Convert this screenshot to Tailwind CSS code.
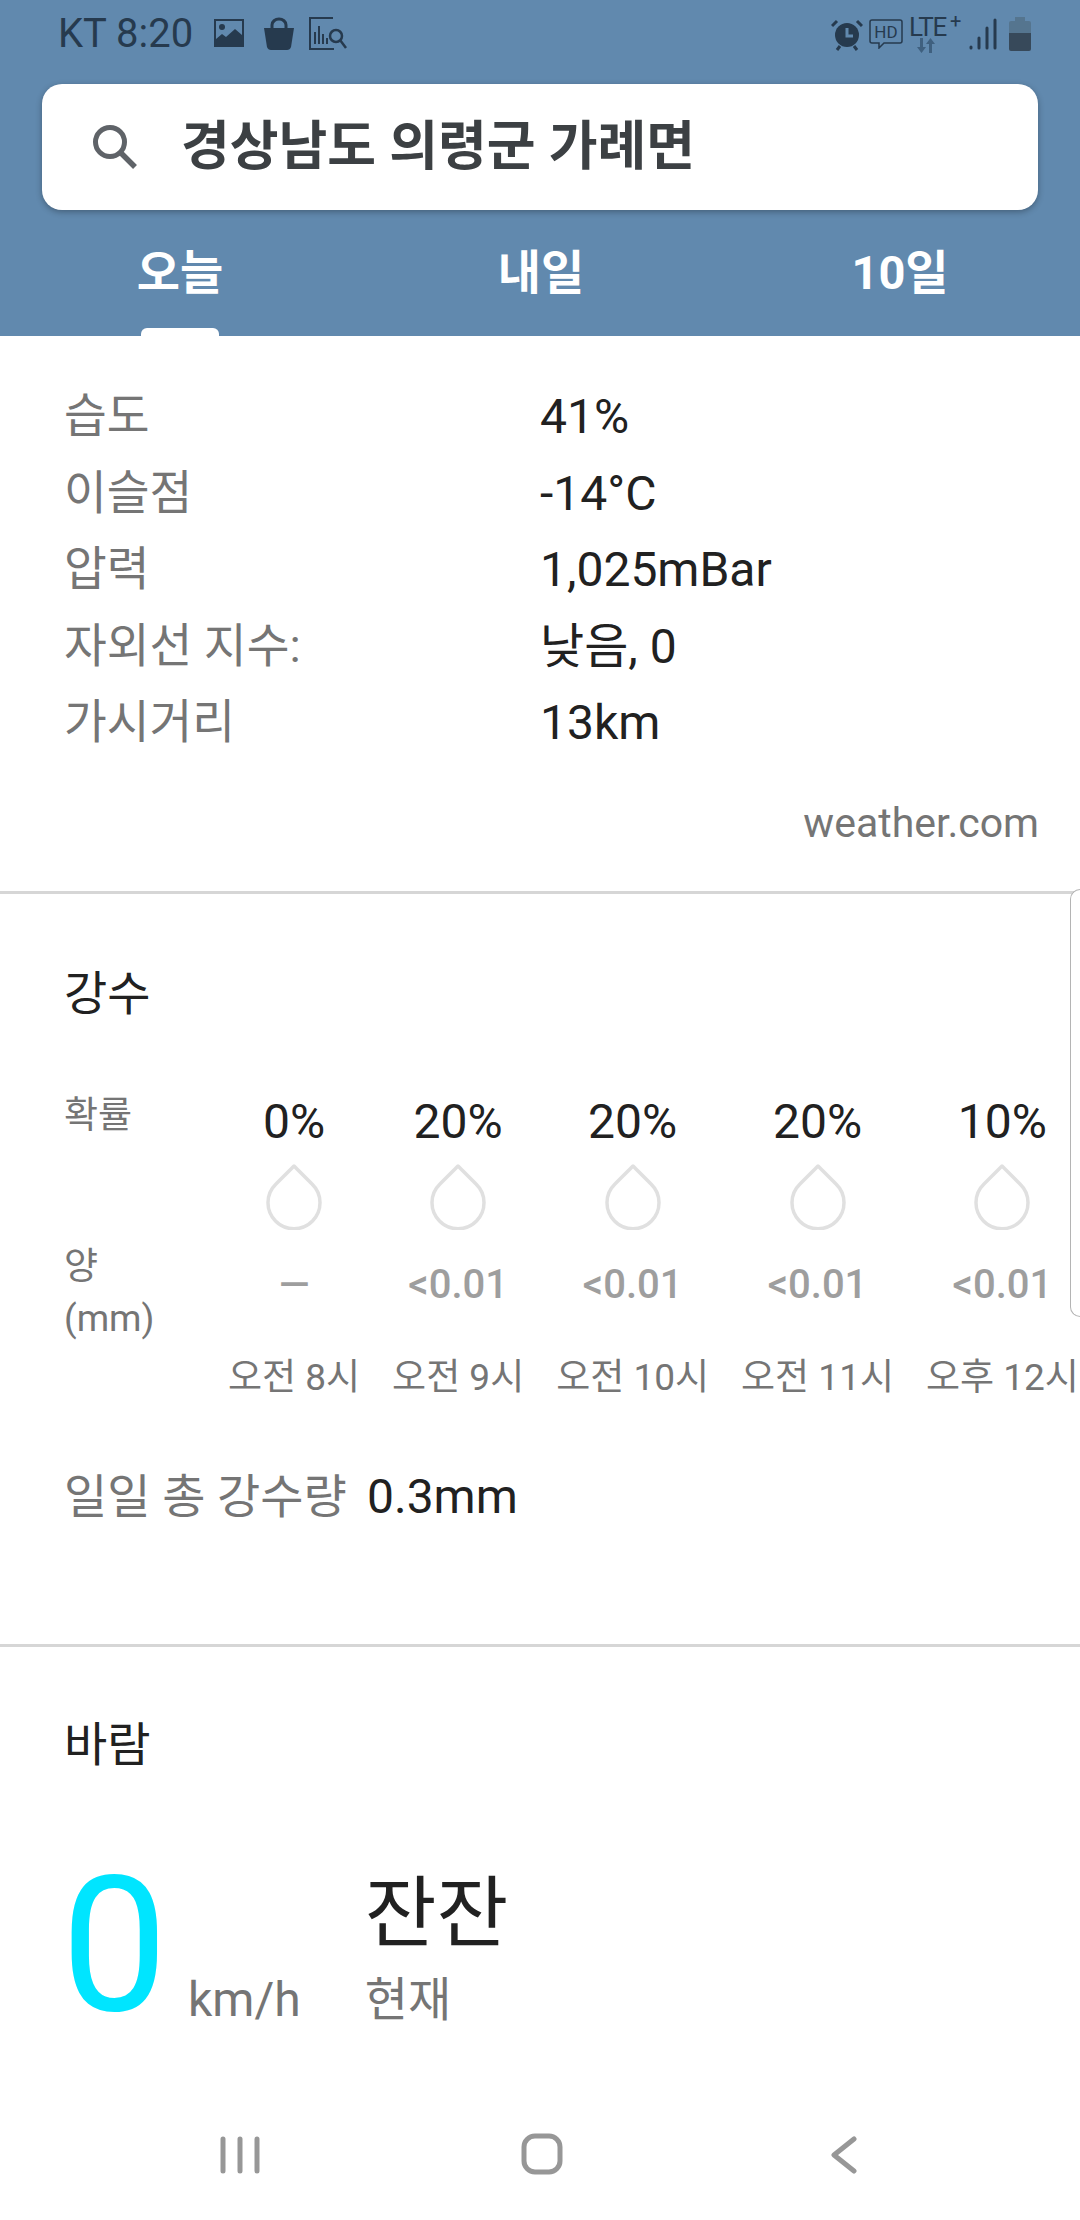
<!DOCTYPE html>
<html lang="ko">

<head>
  <meta charset="UTF-8" />
  <meta name="viewport" content="width=device-width, initial-scale=1.0" />
  <title>날씨</title>
  <script src="https://cdn.jsdelivr.net/npm/@tailwindcss/browser@4"></script>
</head>

<body class="bg-white">
  <div class="relative w-[1080px] h-[2220px] overflow-hidden bg-white font-['Roboto','Noto_Sans_CJK_KR',sans-serif]">

    <!-- header -->
    <header class="h-[336px] bg-[#6189ae] flex flex-col">
      <div class="h-[84px] pl-[58px] pr-[49px] flex items-start justify-between text-[#263a4e]">
        <div class="flex items-center h-[66px] pt-[2px]">
          <span class="text-[40px] leading-none">KT 8:20</span>
          <svg class="ml-[20px]" width="32" height="32" viewBox="0 0 32 32">
            <path fill="#263a4e" d="M1 1h30v28H1z" />
            <path fill="#6189ae" d="M3 3h26v14l-7-6-9 8-4-3-6 5z" />
            <circle cx="9" cy="9" r="3" fill="#263a4e" />
          </svg>
          <svg class="ml-[18px]" width="32" height="34" viewBox="0 0 32 34">
            <path fill="#263a4e" d="M1 11h30l-3 19q-1 3-4 3H8q-3 0-4-3z" />
            <path fill="none" stroke="#263a4e" stroke-width="3" d="M9 12V8a7 6 0 0 1 14 0v4" />
          </svg>
          <svg class="ml-[14px]" width="38" height="34" viewBox="0 0 38 34">
            <path fill="none" stroke="#263a4e" stroke-width="2" d="M24 1H1v31h24" />
            <path stroke="#263a4e" stroke-width="2" d="M6 27V15M10 27V9M14 27V17M18 27V21" />
            <circle cx="27" cy="19" r="6" fill="#6189ae" stroke="#263a4e" stroke-width="2.500" />
            <path stroke="#263a4e" stroke-width="2.500" d="M31 23l6 8" />
          </svg>
        </div>
        <div class="flex items-center h-[66px] pt-[2px]">
          <svg width="32" height="34" viewBox="0 0 32 34">
            <circle cx="16" cy="18" r="12" fill="#263a4e" />
            <path stroke="#263a4e" stroke-width="3" d="M1 9l5-5M31 9l-5-5M6 33l3-4M26 33l-3-4" />
            <path fill="none" stroke="#6189ae" stroke-width="3" d="M16 11v8h6" />
          </svg>
          <svg class="ml-[6px]" width="34" height="30" viewBox="0 0 34 30">
            <path fill="none" stroke="#263a4e" stroke-width="1.500" d="M3 1h28q2 0 2 2v19q0 2-2 2H15l-5 5v-5H3q-2 0-2-2V3q0-2 2-2z" />
            <text x="17" y="19" text-anchor="middle" font-size="17" fill="#263a4e" font-family="Roboto">HD</text>
          </svg>
          <div class="relative ml-[6px] w-[52px] h-[40px] text-[26px] leading-none tracking-tighter">
            LTE<span class="absolute -top-[3px] left-[41px] text-[20px]">+</span>
            <svg class="absolute left-[8px] top-[24px]" width="20" height="16" viewBox="0 0 20 16">
              <path fill="#3f607f" d="M3 0h3v9h3l-4.500 6-4.500-6h3z" />
              <path fill="#3f607f" d="M15 15h-3V6H9l4.500-6 4.500 6h-3z" />
            </svg>
          </div>
          <svg class="ml-[8px]" width="28" height="32" viewBox="0 0 28 32">
            <path stroke="#263a4e" stroke-width="3" stroke-linecap="round" d="M2 30v-1M10 30V20M18 30V10M26 30V2" />
          </svg>
          <svg class="ml-[12px]" width="22" height="34" viewBox="0 0 22 34">
            <path fill="#55758f" d="M6 0h10v4h4q2 0 2 2v10H0V6q0-2 2-2h4z" />
            <path fill="#37495a" d="M0 16h22v16q0 2-2 2H2q-2 0-2-2z" />
          </svg>
        </div>
      </div>

      <div class="mx-[42px] h-[126px] rounded-[20px] bg-white shadow-[0_2px_6px_rgba(0,0,0,0.3)] flex items-center pl-[50px]">
        <svg width="46" height="46" viewBox="0 0 46 46">
          <circle cx="18" cy="18" r="14.500" fill="none" stroke="#5f6368" stroke-width="5" />
          <path stroke="#5f6368" stroke-width="5.500" d="M28 28l15 15" />
        </svg>
        <span class="ml-[43px] text-[53px] leading-none font-bold text-[#3c4043]">경상남도 의령군 가례면</span>
      </div>

      <nav class="flex-1 relative text-white text-[47px] font-bold">
        <span class="absolute left-[180px] top-[39px] -translate-x-1/2 leading-none">오늘</span>
        <span class="absolute left-[541px] top-[39px] -translate-x-1/2 leading-none">내일</span>
        <span class="absolute left-[900px] top-[39px] -translate-x-1/2 leading-none">10일</span>
        <div class="absolute left-[141px] bottom-0 w-[78px] h-[8px] bg-white rounded-t-[6px]"></div>
      </nav>
    </header>

    <!-- details -->
    <section class="h-[558px] border-b-[3px] border-[#d6d6d6] px-[64px] pt-[43px] text-[48px]">
      <div class="grid grid-cols-[476px_1fr] auto-rows-[76.5px] items-center">
        <span class="text-[46.500px] text-[#757575]">습도</span><span class="text-[#212121]">41%</span>
        <span class="text-[46.500px] text-[#757575]">이슬점</span><span class="text-[#212121]">-14°C</span>
        <span class="text-[46.500px] text-[#757575]">압력</span><span class="text-[#212121]">1,025mBar</span>
        <span class="text-[46.500px] text-[#757575]">자외선 지수:</span><span class="text-[#212121]">낮음, 0</span>
        <span class="text-[46.500px] text-[#757575]">가시거리</span><span class="text-[#212121]">13km</span>
      </div>
      <div class="mt-[33px] mr-[-23px] text-right text-[41px] leading-[57px] text-[#757575]">weather.com</div>
    </section>

    <!-- precipitation -->
    <section class="relative h-[753px] border-b-[3px] border-[#d6d6d6] pl-[64px] pt-[67px]">
      <h2 class="text-[47px] leading-[66px] text-[#212121]">강수</h2>
      <div class="mt-[63px] flex text-center">
        <div class="w-[164px] text-left text-[37px] leading-[52px] text-[#757575]">
          <div class="h-[151px]">확률</div>
          <div>양<br />(mm)</div>
        </div>
        <div class="flex gap-[32px] shrink-0 pt-[4px]">
          <div class="flex flex-col items-center">
            <span class="h-[56px] text-[48px] leading-[56px] text-[#212121]">0%</span>
            <svg class="mt-[14px]" width="58" height="66" viewBox="0 0 58 66"><path fill="none" stroke="#e0e0e0" stroke-width="3.500" stroke-linejoin="round" d="M29 2L47 20a26 26 0 1 1-36 0z" /></svg>
            <span class="mt-[30px] h-[50px] text-[40px] leading-[50px] font-medium text-[#9e9e9e]">—</span>
            <span class="mt-[43px] text-[37px] leading-[50px] text-[#757575] whitespace-nowrap">오전 8시</span>
          </div>
          <div class="flex flex-col items-center">
            <span class="h-[56px] text-[48px] leading-[56px] text-[#212121]">20%</span>
            <svg class="mt-[14px]" width="58" height="66" viewBox="0 0 58 66"><path fill="none" stroke="#e0e0e0" stroke-width="3.500" stroke-linejoin="round" d="M29 2L47 20a26 26 0 1 1-36 0z" /></svg>
            <span class="mt-[30px] h-[50px] text-[40px] leading-[50px] font-medium text-[#9e9e9e]">&lt;0.01</span>
            <span class="mt-[43px] text-[37px] leading-[50px] text-[#757575] whitespace-nowrap">오전 9시</span>
          </div>
          <div class="flex flex-col items-center">
            <span class="h-[56px] text-[48px] leading-[56px] text-[#212121]">20%</span>
            <svg class="mt-[14px]" width="58" height="66" viewBox="0 0 58 66"><path fill="none" stroke="#e0e0e0" stroke-width="3.500" stroke-linejoin="round" d="M29 2L47 20a26 26 0 1 1-36 0z" /></svg>
            <span class="mt-[30px] h-[50px] text-[40px] leading-[50px] font-medium text-[#9e9e9e]">&lt;0.01</span>
            <span class="mt-[43px] text-[37px] leading-[50px] text-[#757575] whitespace-nowrap">오전 10시</span>
          </div>
          <div class="flex flex-col items-center">
            <span class="h-[56px] text-[48px] leading-[56px] text-[#212121]">20%</span>
            <svg class="mt-[14px]" width="58" height="66" viewBox="0 0 58 66"><path fill="none" stroke="#e0e0e0" stroke-width="3.500" stroke-linejoin="round" d="M29 2L47 20a26 26 0 1 1-36 0z" /></svg>
            <span class="mt-[30px] h-[50px] text-[40px] leading-[50px] font-medium text-[#9e9e9e]">&lt;0.01</span>
            <span class="mt-[43px] text-[37px] leading-[50px] text-[#757575] whitespace-nowrap">오전 11시</span>
          </div>
          <div class="flex flex-col items-center">
            <span class="h-[56px] text-[48px] leading-[56px] text-[#212121]">10%</span>
            <svg class="mt-[14px]" width="58" height="66" viewBox="0 0 58 66"><path fill="none" stroke="#e0e0e0" stroke-width="3.500" stroke-linejoin="round" d="M29 2L47 20a26 26 0 1 1-36 0z" /></svg>
            <span class="mt-[30px] h-[50px] text-[40px] leading-[50px] font-medium text-[#9e9e9e]">&lt;0.01</span>
            <span class="mt-[43px] text-[37px] leading-[50px] text-[#757575] whitespace-nowrap">오후 12시</span>
          </div>
        </div>
      </div>
      <div class="mt-[64px] flex items-center leading-[60px]">
        <span class="text-[47px] text-[#757575] w-[303px]">일일 총 강수량</span>
        <span class="text-[48px] text-[#212121]">0.3mm</span>
      </div>
      <!-- edge handle over the card -->
      <div class="absolute right-0 -top-[5px] w-[10px] h-[428px] bg-white border border-r-0 border-[#b4b4b4] rounded-l-[14px]"></div>
    </section>

    <!-- wind -->
    <section class="pl-[64px] pt-[65px]">
      <h2 class="text-[47px] leading-[66px] text-[#212121]">바람</h2>
      <div class="mt-[57px] flex items-end">
        <span class="-ml-[3px] w-[127px] text-[190px] leading-[220px] font-normal text-[#00e5ff]">0</span>
        <span class="mb-[25px] text-[48px] leading-[60px] text-[#757575]">km/h</span>
        <div class="ml-[64px] flex flex-col mb-[25px]">
          <span class="text-[78px] leading-[96px] text-[#212121]">잔잔</span>
          <span class="mt-[7px] text-[47px] leading-[60px] text-[#757575]">현재</span>
        </div>
      </div>
    </section>

    <!-- android nav bar -->
    <div class="absolute left-0 bottom-0 w-full h-[120px] bg-white">
      <svg class="absolute left-[220px] top-[36px]" width="40" height="38" viewBox="0 0 40 38">
        <path stroke="#979797" stroke-width="5" stroke-linecap="round" d="M3 3v32M20 3v32M37 3v32" />
      </svg>
      <svg class="absolute left-[521px] top-[33px]" width="42" height="42" viewBox="0 0 42 42">
        <rect x="3" y="3" width="36" height="36" rx="11" fill="none" stroke="#979797" stroke-width="5" />
      </svg>
      <svg class="absolute left-[830px] top-[36px]" width="28" height="38" viewBox="0 0 28 38">
        <path fill="none" stroke="#979797" stroke-width="5" stroke-linecap="round" stroke-linejoin="round" d="M24 3L4 19l20 16" />
      </svg>
    </div>
  </div>
</body>

</html>
